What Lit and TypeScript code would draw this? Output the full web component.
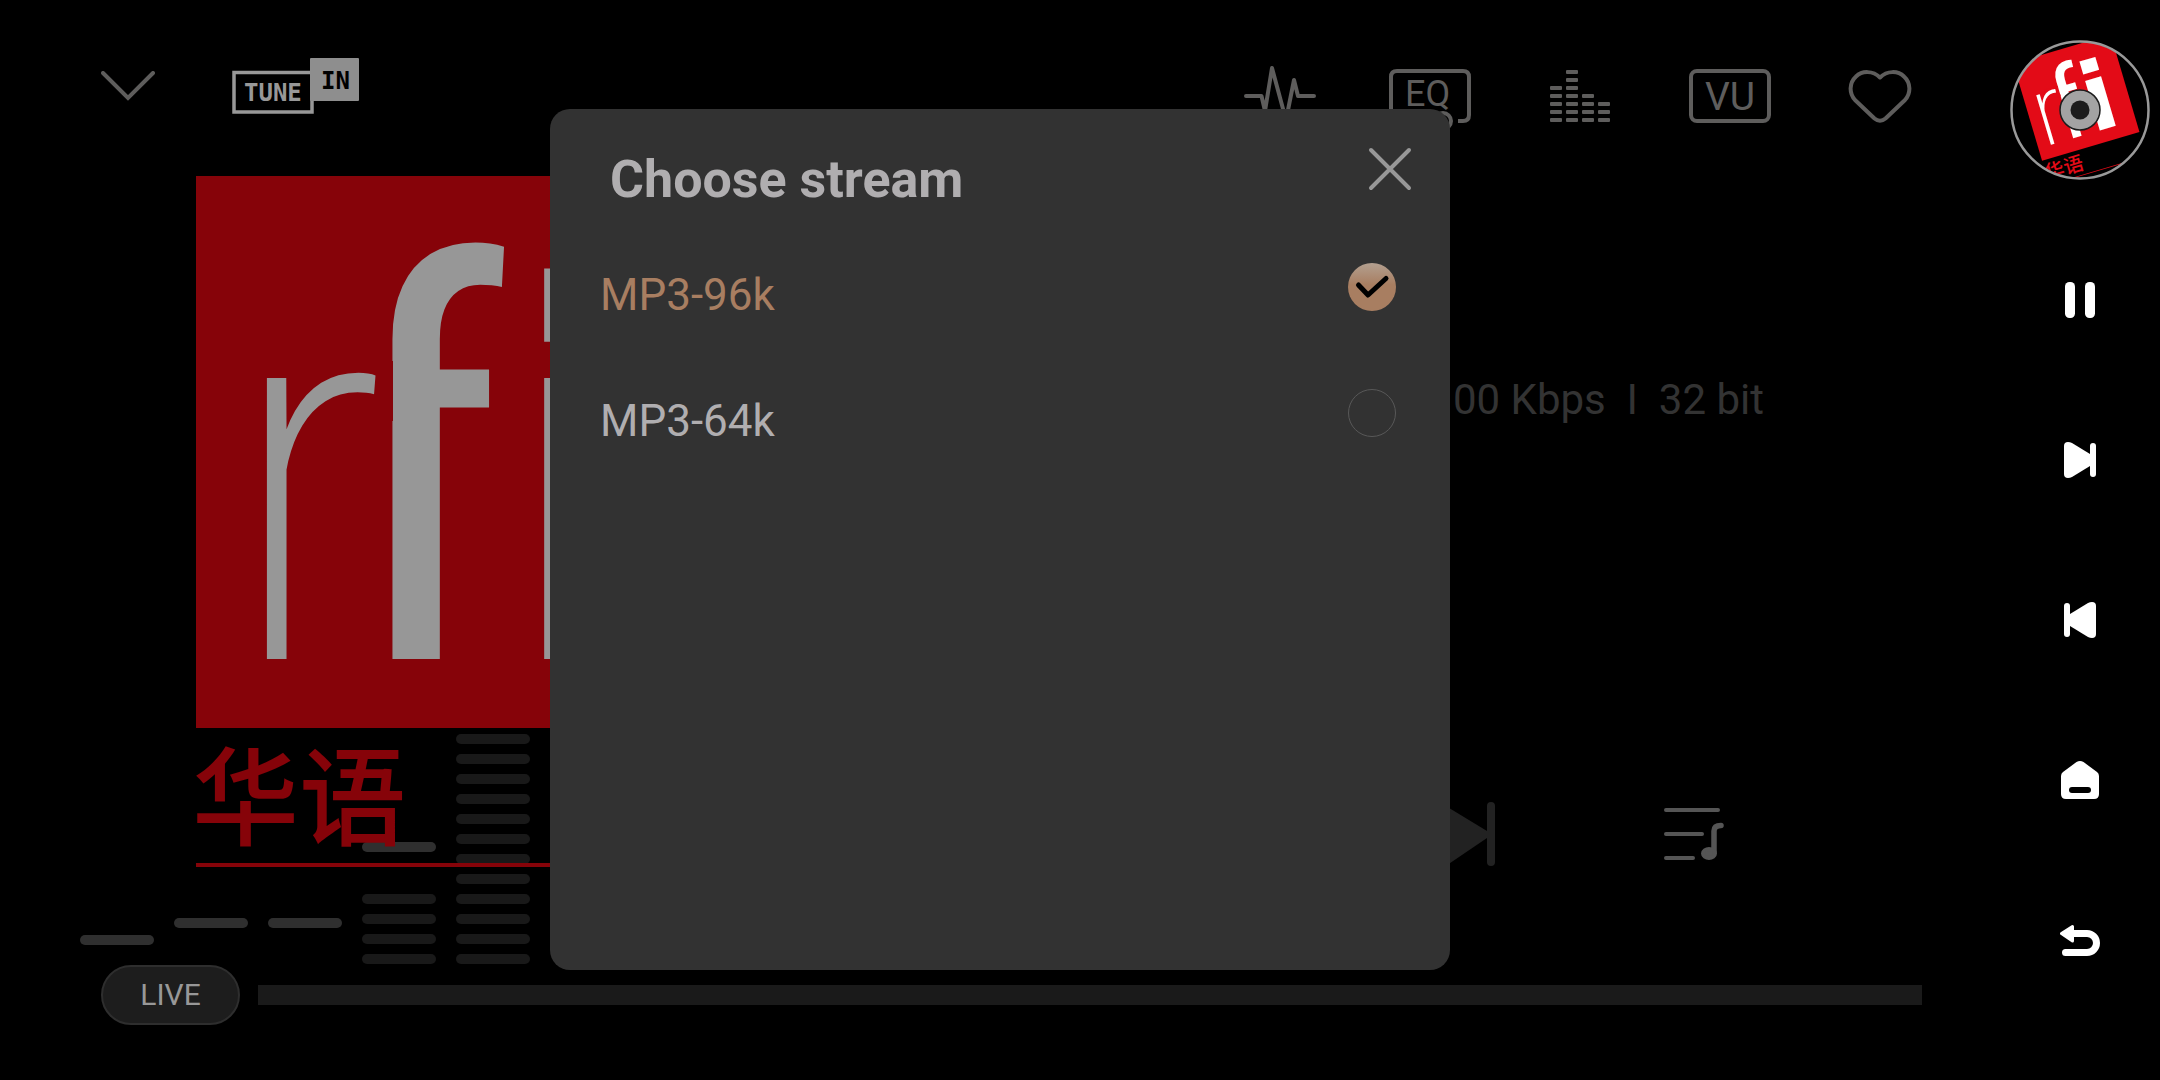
import { LitElement, html, svg, css } from "lit";
import { customElement, state } from "lit/decorators.js";

/* Station artwork, shared by the large cover and the spinning disc. */
const artwork = (red: string, ink: string) => svg`
  <rect width="552" height="552" fill=${red}></rect>
  <g fill=${ink} font-family="Roboto Condensed, Roboto, sans-serif">
    <text x="140" y="483" font-weight="400" font-size="548">f</text>
    <rect x="120" y="185" width="77" height="60" fill=${red}></rect>
    <text x="30" y="483" font-weight="200" font-size="532">r</text>
    <text x="305" y="483" font-family="DejaVu Sans, sans-serif" font-weight="700" font-size="514">i</text>
  </g>
  <text x="-4" y="661" fill=${red} font-family="Noto Sans CJK SC, sans-serif" font-weight="500" font-size="107">华语</text>
  <rect y="687" width="552" height="4" fill=${red}></rect>`;

@customElement("station-cover")
export class StationCover extends LitElement {
  static styles = css`
    :host { display: block; }
    svg { display: block; width: 552px; height: 692px; }
  `;
  render() {
    return html`<svg viewBox="0 0 552 692" role="img" aria-label="rfi 华语">${artwork("#860309", "#979797")}</svg>`;
  }
}

@customElement("station-disc")
export class StationDisc extends LitElement {
  static styles = css`
    :host { display: block; }
    svg { display: block; width: 140px; height: 140px; }
  `;
  render() {
    return html`<svg viewBox="0 0 140 140" role="img" aria-label="Now playing">
      <defs><clipPath id="round"><circle cx="70" cy="70" r="68"></circle></clipPath></defs>
      <g clip-path="url(#round)">
        <g transform="translate(70 70) rotate(-16.5) scale(.184) translate(-276 -346)">${artwork("#e30b17", "#fff")}</g>
      </g>
      <circle cx="70" cy="70" r="68.5" fill="none" stroke="#999" stroke-width="2.5"></circle>
      <circle cx="70" cy="70" r="20" fill="#a3a3a3" stroke="#1c1c1c" stroke-width="1.5"></circle>
      <circle cx="70" cy="70" r="9.5" fill="#1c1c1c"></circle>
    </svg>`;
  }
}

interface Column { lit: number; peak: number; }

@customElement("spectrum-bars")
export class SpectrumBars extends LitElement {
  static styles = css`
    :host { display: flex; align-items: flex-end; gap: 20px; }
    .column { width: 74px; display: flex; flex-direction: column; }
    .peak { height: 10px; border-radius: 5px; background: #2f2f2f; }
    .cells { display: flex; flex-direction: column; gap: 10px; }
    .cell { height: 10px; border-radius: 5px; background: #191919; }
  `;
  private columns: Column[] = [
    { lit: 0, peak: 19 },
    { lit: 0, peak: 36 },
    { lit: 0, peak: 36 },
    { lit: 4, peak: 42 },
    { lit: 12, peak: 30 },
  ];
  render() {
    return this.columns.map(
      (c) => html`<div class="column">
        <div class="peak" style="margin-bottom:${c.peak}px"></div>
        <div class="cells">${Array.from({ length: c.lit }, () => html`<div class="cell"></div>`)}</div>
      </div>`
    );
  }
}

@customElement("stream-dialog")
export class StreamDialog extends LitElement {
  static styles = css`
    :host {
      display: block; box-sizing: border-box; width: 45%; min-height: 861px;
      border-radius: 20px; background: #323232; color: #b0aeb0;
      font-family: Roboto, sans-serif;
    }
    .head { display: flex; justify-content: space-between; align-items: flex-start; padding: 34px 34px 0 60px; height: 82px; }
    h2 { margin: 0; padding-top: 5px; font-size: 52px; line-height: 64px; font-weight: 700; }
    .close { width: 52px; height: 52px; padding: 0; border: 0; background: none; }
    svg { display: block; }
    .options { margin: 0; padding: 0; border: 0; }
    .option { display: flex; justify-content: space-between; align-items: flex-start; height: 126px; padding: 0 54px 0 50px; box-sizing: border-box; }
    .name { font-size: 44px; line-height: 52px; padding-top: 44px; }
    .option.chosen .name { color: #a87e61; }
    .tick { display: grid; padding-top: 38px; }
    .tick > * { grid-area: 1 / 1; }
    input {
      appearance: none; margin: 0; width: 48px; height: 48px; box-sizing: border-box;
      border: 1px solid #585858; border-radius: 50%;
    }
    input:checked { border: 0; background: linear-gradient(#b3a090, #a87e61 45%); }
    .tick svg { pointer-events: none; }
  `;
  @state() private chosen = "MP3-96k";
  private streams = ["MP3-96k", "MP3-64k"];
  render() {
    return html`
      <div class="head">
        <h2>Choose stream</h2>
        <button class="close" aria-label="Close">
          <svg width="52" height="52" viewBox="0 0 52 52"><path d="M7 7 45 45M45 7 7 45" stroke="#989898" stroke-width="4" stroke-linecap="round"></path></svg>
        </button>
      </div>
      <fieldset class="options" aria-label="Stream">
        ${this.streams.map((name, i) => html`
          <label class="option ${name === this.chosen ? "chosen" : ""}" for="stream-${i}">
            <span class="name">${name}</span>
            <span class="tick">
              <input type="radio" name="stream" id="stream-${i}" .checked=${name === this.chosen} @change=${() => (this.chosen = name)}>
              ${name === this.chosen
                ? html`<svg width="48" height="48" viewBox="0 0 48 48"><path d="M10.500 22 20 32 38 15.500" fill="none" stroke="#000" stroke-width="5" stroke-linecap="round" stroke-linejoin="round"></path></svg>`
                : ""}
            </span>
          </label>`)}
      </fieldset>`;
  }
}

const meter = [5, 7, 4, 3];

@customElement("app-root")
export class AppRoot extends LitElement {
  static styles = css`
    :host {
      display: grid; grid-template-columns: minmax(0, 1fr) 160px; min-height: 100vh;
      background: #000; color: #333; font-family: Roboto, sans-serif;
    }
    button { padding: 0; border: 0; background: none; color: inherit; font: inherit; display: grid; place-items: center; }
    svg { display: block; }
    .player { position: relative; display: flex; flex-direction: column; }
    .header { display: flex; justify-content: space-between; height: 176px; padding: 0 45px 0 101px; box-sizing: border-box; }
    .brand { display: flex; align-items: center; gap: 77px; padding-bottom: 4px; color: #5e5d5c; }
    .tools { display: flex; align-items: center; padding-top: 16px; color: #5e5d5c; }
    .tools button { width: 150px; height: 80px; }
    .stage { flex: 1; display: flex; position: relative; padding-left: 196px; z-index: 1; }
    .info { flex: 1; display: flex; flex-direction: column; align-items: flex-end; padding: 199px 236px 0 0; }
    .quality { margin: 0; font-size: 42px; line-height: 50px; white-space: pre; }
    .transport { display: flex; gap: 167px; align-items: center; margin-top: 377px; padding-right: 40px; color: #222; }
    .queue { color: #555; }
    .footer { display: flex; align-items: center; gap: 18px; padding: 0 78px 55px 101px; }
    .live {
      width: 139px; height: 60px; box-sizing: border-box; border: 2px solid #2e2e2e; border-radius: 30px;
      background: #1d1d1d; color: #989898; font-size: 30px; line-height: 36px;
    }
    .progress { flex: 1; height: 20px; background: #1a1a1a; }
    .spectrum { position: absolute; left: 80px; bottom: 116px; }
    .overlay { position: absolute; inset: 0 0 1px; z-index: 2; display: flex; align-items: center; justify-content: center; }
    .rail { display: flex; flex-direction: column; align-items: center; padding-top: 40px; color: #fff; }
    .disc { margin-bottom: 40px; }
    .rail .key { width: 160px; height: 160px; }
  `;
  render() {
    return html`
      <main class="player">
        <header class="header">
          <div class="brand">
            <button aria-label="Collapse">
              <svg width="54" height="30" viewBox="0 0 54 30"><path d="M2 2 27 27 52 2" fill="none" stroke="currentColor" stroke-width="4" stroke-linecap="round"></path></svg>
            </button>
            <svg width="128" height="56" viewBox="0 0 128 56" role="img" aria-label="TuneIn">
              <rect x="2" y="14.500" width="78" height="39.500" fill="none" stroke="#989898" stroke-width="3.500"></rect>
              <rect x="78" y="0" width="49" height="43" rx="1" fill="#8e8e8e"></rect>
              <g font-family="DejaVu Sans Mono, monospace" font-weight="700" font-size="24">
                <text x="12" y="43" fill="#989898">TUNE</text>
                <text x="89" y="31" fill="#000">IN</text>
              </g>
            </svg>
          </div>
          <nav class="tools">
            <button aria-label="Waveform">
              <svg width="72" height="60" viewBox="0 0 72 60"><path d="M2 30H17.500L21 45 28 2 42 54 50 14 54 30H70" fill="none" stroke="currentColor" stroke-width="4" stroke-linecap="round" stroke-linejoin="round"></path></svg>
            </button>
            <button aria-label="Equalizer">
              <svg width="82" height="54" viewBox="0 0 82 54" overflow="visible">
                <path d="M42 52H8Q2 52 2 46V8Q2 2 8 2H74Q80 2 80 8V46Q80 52 74 52H71" fill="none" stroke="currentColor" stroke-width="4" stroke-linecap="square"></path>
                <circle cx="54" cy="52" r="8" fill="none" stroke="currentColor" stroke-width="4"></circle>
                <text x="16" y="37" fill="currentColor" font-family="Roboto, sans-serif" font-size="36">EQ</text>
              </svg>
            </button>
            <button aria-label="Spectrum">
              <svg width="60" height="52" viewBox="0 0 60 52" fill="currentColor">
                ${meter.map((n, c) => Array.from({ length: n }, (_, r) => svg`<rect x=${c * 16} y=${48 - r * 8} width="12" height="4" rx="1"></rect>`))}
              </svg>
            </button>
            <button aria-label="VU meter">
              <svg width="82" height="54" viewBox="0 0 82 54">
                <rect x="2" y="2" width="78" height="50" rx="6" fill="none" stroke="currentColor" stroke-width="4"></rect>
                <text x="16" y="41" fill="currentColor" font-family="Roboto, sans-serif" font-size="39">VU</text>
              </svg>
            </button>
            <button aria-label="Favourite">
              <svg width="68" height="56" viewBox="0 0 68 56"><path d="M34 9.500C27 2.500 16 2.500 10 8.500C3 15 3 25.500 9 32L28.500 50.500Q34 55 39.500 50.500L59 32C65 25.500 65 15 58 8.500C52 2.500 41 2.500 34 9.500Z" fill="none" stroke="currentColor" stroke-width="4" stroke-linejoin="round"></path></svg>
            </button>
          </nav>
        </header>

        <spectrum-bars class="spectrum"></spectrum-bars>

        <section class="stage">
          <station-cover></station-cover>
          <div class="info">
            <p class="quality">00 Kbps  I  32 bit</p>
            <div class="transport">
              <button aria-label="Next">
                <svg width="64" height="64" viewBox="0 0 64 64" fill="currentColor"><path d="M0 -5 56 29V36L0 74Z"></path><rect x="56" y="0" width="8" height="64" rx="4"></rect></svg>
              </button>
              <button class="queue" aria-label="Play queue">
                <svg width="62" height="56" viewBox="0 0 62 56" fill="none" stroke="currentColor" stroke-width="4" stroke-linecap="round">
                  <path d="M4 4H56M4 28H40M4 52H31"></path>
                  <path d="M52 46V25Q52 19.500 59 19.500" stroke-width="5.500"></path>
                  <ellipse cx="47" cy="47.500" rx="6" ry="4.500" fill="currentColor"></ellipse>
                </svg>
              </button>
            </div>
          </div>
        </section>

        <footer class="footer">
          <button class="live">LIVE</button>
          <div class="progress" role="progressbar" aria-label="Position"></div>
        </footer>

        <div class="overlay"><stream-dialog role="dialog" aria-label="Choose stream"></stream-dialog></div>
      </main>

      <aside class="rail">
        <station-disc class="disc"></station-disc>
        <button class="key" aria-label="Pause">
          <svg width="40" height="40" viewBox="0 0 40 40" fill="currentColor"><rect x="5" y="2" width="10" height="36" rx="4.500"></rect><rect x="25" y="2" width="10" height="36" rx="4.500"></rect></svg>
        </button>
        <button class="key" aria-label="Next track">
          <svg width="40" height="40" viewBox="0 0 40 40" fill="currentColor"><path d="M4 6Q4 2 8 2Q10 2 12 3L30 14V26L12 37Q10 38 8 38Q4 38 4 34Z"></path><rect x="30" y="3" width="6" height="34" rx="3"></rect></svg>
        </button>
        <button class="key" aria-label="Previous track">
          <svg width="40" height="40" viewBox="0 0 40 40" fill="currentColor"><path d="M36 6Q36 2 32 2Q30 2 28 3L10 14V26L28 37Q30 38 32 38Q36 38 36 34Z"></path><rect x="4" y="3" width="6" height="34" rx="3"></rect></svg>
        </button>
        <button class="key" aria-label="Home">
          <svg width="40" height="40" viewBox="0 0 40 40"><path d="M1 16Q1 13.500 3 12L16.500 2Q20 0 23.500 2L37 12Q39 13.500 39 16V34Q39 39 34 39H6Q1 39 1 34Z" fill="currentColor"></path><rect x="9" y="27" width="22" height="6" rx="3" fill="#000"></rect></svg>
        </button>
        <button class="key" aria-label="Back">
          <svg width="40" height="40" viewBox="0 0 40 40"><path d="M12 13.500H27A9.500 9.500 0 0 1 27 32.500H5.500" fill="none" stroke="currentColor" stroke-width="7" stroke-linecap="round"></path><path d="M1.500 13.500 12.500 6.500V21Z" fill="currentColor" stroke="currentColor" stroke-width="3" stroke-linejoin="round"></path></svg>
        </button>
      </aside>`;
  }
}
